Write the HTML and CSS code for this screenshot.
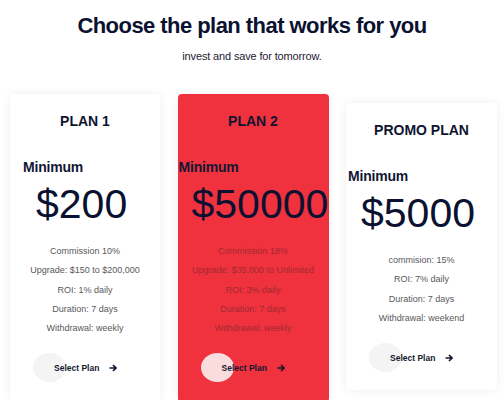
FILE: index.html
```html
<!DOCTYPE html>
<html>
<head>
<meta charset="utf-8">
<link rel="stylesheet" href="styles.css">
</head>
<body>
<header class="intro">
  <h1 class="intro-title">Choose the plan that works for you</h1>
  <p class="intro-sub">invest and save for tomorrow.</p>
</header>
<main class="plans">
  <section class="card card-1">
    <h2 class="card-title">PLAN 1</h2>
    <div class="min">
      <div class="min-label">Minimum</div>
      <div class="min-price">$200</div>
    </div>
    <ul class="details">
      <li>Commission 10%</li>
      <li>Upgrade: $150 to $200,000</li>
      <li>ROI: 1% daily</li>
      <li>Duration: 7 days</li>
      <li>Withdrawal: weekly</li>
    </ul>
    <button class="select">
      <span class="select-text">Select Plan</span>
      <svg class="arrow" width="8" height="8" viewBox="0 0 8 8"><path d="M0.5 4H7M4 1L7 4L4 7" fill="none" stroke="currentColor" stroke-width="1.7"/></svg>
    </button>
  </section>
  <section class="card card-2">
    <h2 class="card-title">PLAN 2</h2>
    <div class="min">
      <div class="min-label">Minimum</div>
      <div class="min-price">$50000</div>
    </div>
    <ul class="details">
      <li>Commission 18%</li>
      <li>Upgrade: $35,000 to Unlimited</li>
      <li>ROI: 3% daily</li>
      <li>Duration: 7 days</li>
      <li>Withdrawal: weekly</li>
    </ul>
    <button class="select">
      <span class="select-text">Select Plan</span>
      <svg class="arrow" width="8" height="8" viewBox="0 0 8 8"><path d="M0.5 4H7M4 1L7 4L4 7" fill="none" stroke="currentColor" stroke-width="1.7"/></svg>
    </button>
  </section>
  <section class="card card-3">
    <h2 class="card-title">PROMO PLAN</h2>
    <div class="min">
      <div class="min-label">Minimum</div>
      <div class="min-price">$5000</div>
    </div>
    <ul class="details">
      <li>commision: 15%</li>
      <li>ROI: 7% daily</li>
      <li>Duration: 7 days</li>
      <li>Withdrawal: weekend</li>
    </ul>
    <button class="select">
      <span class="select-text">Select Plan</span>
      <svg class="arrow" width="8" height="8" viewBox="0 0 8 8"><path d="M0.5 4H7M4 1L7 4L4 7" fill="none" stroke="currentColor" stroke-width="1.7"/></svg>
    </button>
  </section>
</main>
</body>
</html>
```
FILE: styles.css
```css
* { box-sizing: border-box; }
html, body {
  margin: 0;
  padding: 0;
  background: #ffffff;
  font-family: "Liberation Sans", Arial, sans-serif;
  color: #0d1331;
  overflow: hidden;
  height: 400px;
}
.intro {
  text-align: center;
  padding-top: 13px;
}
.intro-title {
  margin: 0;
  font-size: 22px;
  line-height: 26px;
  font-weight: 700;
  letter-spacing: -0.55px;
  color: #0b1230;
}
.intro-sub {
  margin: 10px 0 0;
  font-size: 11px;
  line-height: 14px;
  color: #1d2233;
  letter-spacing: -0.15px;
}
.plans {
  display: flex;
  align-items: flex-start;
  gap: 17.5px;
  padding-left: 10px;
  margin-top: 31px;
}
.card {
  flex: none;
  width: 151px;
  background: #ffffff;
  border-radius: 4px;
  box-shadow: 0 0 10px rgba(20, 30, 50, 0.07);
  padding: 18px 0 20px;
  text-align: center;
}
.card-1 { width: 150px; }
.card-2 {
  background: #f0323e;
}
.card-3 {
  margin-top: 9px;
  padding-bottom: 18px;
}
.card-title {
  margin: 0;
  font-size: 14px;
  line-height: 18px;
  font-weight: 700;
  color: #0f1530;
}
.min {
  text-align: left;
  margin-top: 28px;
}
.card-1 .min { padding-left: 13px; }
.card-2 .min { padding-left: 1px; }
.card-3 .min { padding-left: 2px; }
.min-label {
  font-size: 14px;
  line-height: 18px;
  font-weight: 700;
  color: #111733;
  letter-spacing: -0.2px;
}
.min-price {
  margin-top: 6px;
  padding-left: 13px;
  font-size: 41px;
  line-height: 44px;
  font-weight: 400;
  color: #0b1130;
  white-space: nowrap;
}
.details {
  list-style: none;
  margin: 16px 0 0;
  padding: 0;
  font-size: 9px;
  line-height: 19.3px;
  color: #58585c;
}
.card-2 .details { color: #a02a31; }
.select {
  position: relative;
  display: flex;
  align-items: center;
  margin: 15px 0 0 23px;
  padding: 0 0 0 21px;
  height: 29px;
  border: 0;
  background: transparent;
  font-family: inherit;
  font-size: 8.5px;
  font-weight: 700;
  color: #15192e;
  cursor: pointer;
}
.select::before {
  content: "";
  position: absolute;
  left: 0;
  top: 0;
  width: 33px;
  height: 29px;
  border-radius: 50%;
  background: #f4f4f5;
}
.card-2 .select::before { background: #f9dcdd; }
.select-text, .arrow { position: relative; }
.arrow { margin-left: 10px; }
```
